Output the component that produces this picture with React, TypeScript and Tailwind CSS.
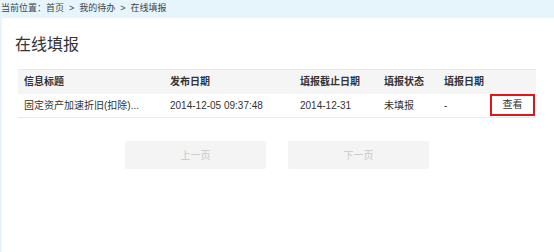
const rows = [
    {title: "固定资产加速折旧(扣除)...", publish: "2014-12-05 09:37:48", deadline: "2014-12-31", status: "未填报", filled: "-"},
];

const font = {fontFamily: '"Liberation Sans", "Noto Sans CJK SC", sans-serif'};

export default function App() {
    return <div className="w-[554px] h-[252px] bg-[#e6f4fc] flex flex-col text-[#333]" style={font}>
        <div className="h-[18px] flex items-center pl-px text-[9px] text-[#444]">
            当前位置：首页&nbsp;&nbsp;&gt;&nbsp;&nbsp;我的待办&nbsp;&nbsp;&gt;&nbsp;&nbsp;在线填报
        </div>
        <div className="flex-1 ml-[2px] bg-white pt-[18px] pl-[13px] pr-[18px]">
            <h1 className="text-[16px] leading-[17px] text-[#333]">在线填报</h1>
            <div className="pl-[3px] mt-[16px]">
                <table className="w-full text-[10px] border-collapse">
                    <thead>
                    <tr className="bg-[#f5f5f5] border-t border-[#e8e8e8] h-[24px] text-left">
                        <th className="pl-[6px] w-[152px] font-bold">信息标题</th>
                        <th className="w-[130px] font-bold">发布日期</th>
                        <th className="w-[84px] font-bold">填报截止日期</th>
                        <th className="w-[60px] font-bold">填报状态</th>
                        <th className="font-bold">填报日期</th>
                        <th className="w-[46px]"></th>
                    </tr>
                    </thead>
                    <tbody>
                    {rows.map(r => <tr key={r.title} className="h-[24px] border-b border-[#ebebeb]">
                        <td className="pl-[6px]">{r.title}</td>
                        <td>{r.publish}</td>
                        <td>{r.deadline}</td>
                        <td>{r.status}</td>
                        <td>{r.filled}</td>
                        <td className="p-0 align-top">
                            <button className="w-[45px] h-[22px] border-2 border-[#e3141c] bg-white text-[10px] text-[#333]">查看</button>
                        </td>
                    </tr>)}
                    </tbody>
                </table>
            </div>
            <div className="flex gap-[22px] mt-[23px] ml-[110px]">
                <button className="w-[141px] h-[28px] rounded-[2px] bg-[#f4f4f4] text-[#c8c8c8] text-[10px]">上一页</button>
                <button className="w-[141px] h-[28px] rounded-[2px] bg-[#f4f4f4] text-[#c8c8c8] text-[10px]">下一页</button>
            </div>
        </div>
    </div>
}
